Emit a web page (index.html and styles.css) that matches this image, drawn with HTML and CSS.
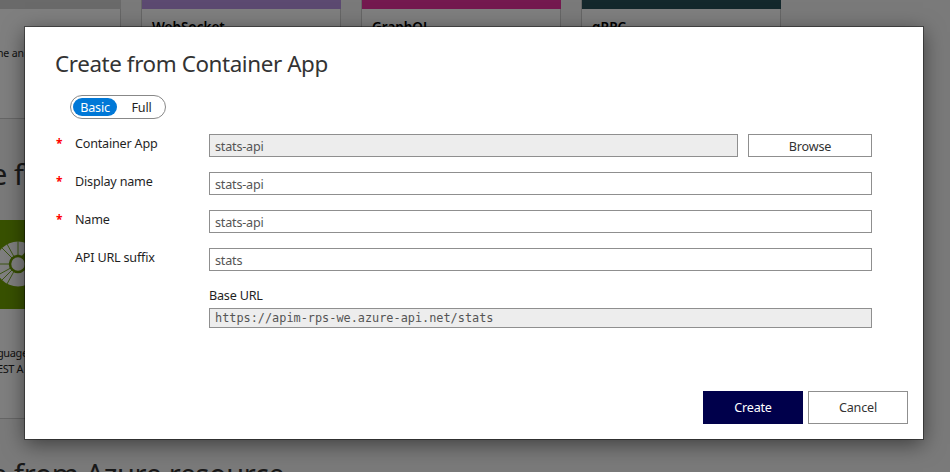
FILE: index.html
```html
<!DOCTYPE html>
<html lang="en">
<head>
<meta charset="utf-8">
<title>Create from Container App</title>
<link rel="stylesheet" href="styles.css">
</head>
<body>
<main class="page">
  <div class="cards">
    <section class="card"><div class="bar gray"></div><p class="card-text">ne an</p></section>
    <section class="card"><div class="bar purple"></div><h3>WebSocket</h3></section>
    <section class="card"><div class="bar pink"></div><h3>GraphQL</h3></section>
    <section class="card"><div class="bar teal"></div><h3>gRPC</h3></section>
  </div>
  <h2 class="first">e f</h2>
  <div class="cards lower">
    <section class="card tall">
      <div class="tile">
        <svg width="46" height="46" viewBox="0 0 46 46">
          <circle cx="23" cy="23" r="22.5" fill="#fff"/>
          <g stroke="#78a928" stroke-width="1"><path d="M23 0v23M0 23h23M7 7l16 16M12 3l11 20M23 23L12 43M23 23L3 34M23 23L7 39M23 23L39 7"/></g>
          <circle cx="23" cy="23" r="8" fill="#fff" stroke="#6b9a00" stroke-width="2.5"/>
          <path d="M27 17l7-8" stroke="#6b9a00" stroke-width="3"/>
        </svg>
      </div>
      <p class="tile-text">guage<br>EST A</p>
    </section>
  </div>
  <h2 class="second">e from Azure resource</h2>
</main>
<div class="overlay">
  <form class="dialog">
    <h1>Create from Container App</h1>
    <div class="toggle"><span class="on">Basic</span><span>Full</span></div>
    <div class="row"><span class="star">*</span><label>Container App</label><div class="field disabled"><span>stats-api</span></div><button type="button" class="browse">Browse</button></div>
    <div class="row"><span class="star">*</span><label>Display name</label><div class="field"><span>stats-api</span></div></div>
    <div class="row"><span class="star">*</span><label>Name</label><div class="field"><span>stats-api</span></div></div>
    <div class="row"><span class="star"></span><label>API URL suffix</label><div class="field"><span>stats</span></div></div>
    <div class="base">
      <label>Base URL</label>
      <div class="url">https://apim-rps-we.azure-api.net/stats</div>
    </div>
    <div class="actions"><button type="button" class="create">Create</button><button type="button">Cancel</button></div>
  </form>
</div>
</body>
</html>
```
FILE: styles.css
```css
* { box-sizing: border-box; }
body { margin: 0; width: 950px; height: 472px; overflow: hidden; background: #f4f4f4; font: 12.6px/16px "Noto Sans", "Open Sans", sans-serif; letter-spacing: -.2px; color: #1f1f1f; }
h1, h2, h3, p { margin: 0; font-weight: 400; }
.page { height: 472px; overflow: hidden; }
.cards { display: flex; gap: 20px; margin-left: -79px; height: 119px; }
.card { width: 200px; flex: none; background: #fff; border: 1px solid #ccc; border-top: 0; }
.bar { height: 9px; margin: 0 -1px 0 0; }
.gray { background: #d5d5d5; }
.purple { background: #b895e3; }
.pink { background: #e8339f; }
.teal { background: #285058; }
.card h3 { margin: 9px 0 0 10px; font-size: 13.5px; line-height: 18px; font-weight: 600; letter-spacing: 0; color: #000; }
.card-text { margin: 36px 0 0 75px; font-size: 10.6px; letter-spacing: -.2px; }
h2 { font-size: 29px; line-height: 40px; letter-spacing: -.4px; color: #333; white-space: nowrap; margin-left: -9px; }
.first { margin-top: 35px; }
.lower { margin-top: 26px; height: 199px; }
.tall { border-top: 0; }
.tile { height: 89px; background: #70a300; display: flex; padding: 21px 0 0 73px; }
.tile-text { margin: 36px 0 0 75px; font-size: 11px; letter-spacing: -.4px; }
.second { margin-top: 35px; }
.overlay { position: absolute; inset: 0; overflow: hidden; background: rgba(0, 0, 0, .5); padding: 27px 0 0 25px; }
.dialog { width: 898px; height: 412px; padding: 21px 15px 15px 30px; display: flex; flex-direction: column; background: #fff; box-shadow: 0 0 0 1px rgba(0, 0, 0, .4), 0 5px 20px rgba(0, 0, 0, .5); }
h1 { font-size: 22.4px; line-height: 32px; letter-spacing: -.4px; color: #333; }
.toggle { width: 96px; height: 24px; margin: 15px 0 0 15px; border: 1px solid #888; border-radius: 12px; padding: 2px; display: flex; }
.toggle span { width: 44px; flex: none; line-height: 19px; height: 18px; text-align: center; }
.toggle span + span { width: 49px; }
.toggle .on { background: #0078d7; color: #fff; border-radius: 9px; }
.row { display: flex; height: 23px; margin-bottom: 15px; width: 817px; }
.toggle + .row { margin-top: 15px; }
.star { width: 20px; padding-left: 1px; color: #f00; font-size: 12px; font-weight: 700; line-height: 19px; }
label { width: 134px; line-height: 19px; }
.field { flex: 1; border: 1px solid #8f8f8f; padding-left: 5px; line-height: 23px; color: #555; }
.disabled, .url { background: #ededed; }
button { font: inherit; letter-spacing: inherit; color: #333; background: #fff; border: 1px solid #8f8f8f; border-radius: 0; padding: 0; }
.browse { width: 124px; margin-left: 10px; padding-top: 2px; }
.base { width: 663px; margin: 0 0 0 154px; }
.base label { display: block; line-height: 16px; padding-top: 2px; }
.url { height: 20px; margin-top: 4px; border: 1px solid #8f8f8f; padding-left: 5px; color: #555; font: 11.87px/18px "DejaVu Sans Mono", monospace; letter-spacing: 0; }
.actions { display: flex; justify-content: flex-end; gap: 5px; margin-top: auto; }
.actions button { width: 100px; height: 33px; }
.actions .create { background: #00004b; border-color: #00004b; color: #fff; }
```
